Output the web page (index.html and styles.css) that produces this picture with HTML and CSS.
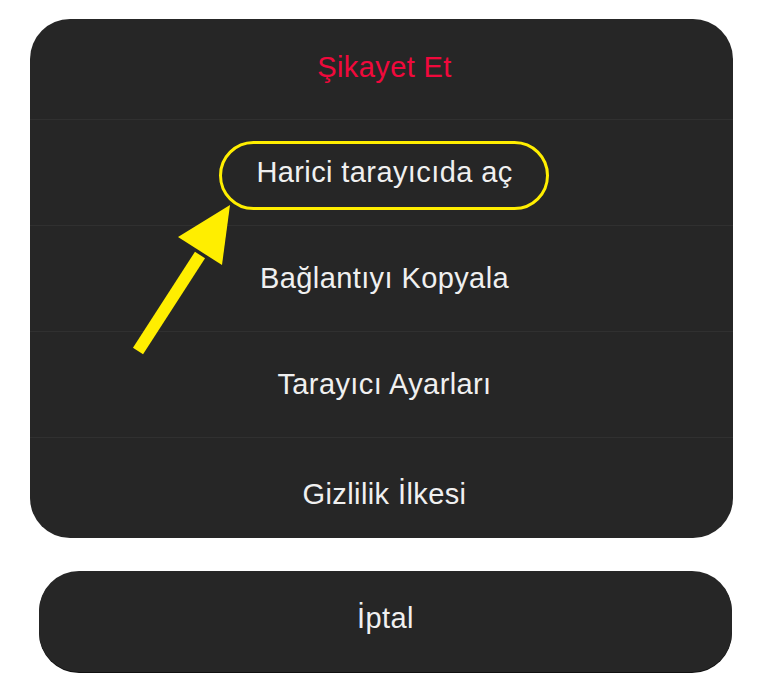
FILE: index.html
```html
<!DOCTYPE html>
<html lang="tr">
<head>
    <meta charset="UTF-8">
    <meta name="viewport" content="width=device-width, initial-scale=1.0">
    <title>Eylem Menüsü</title>
    <link rel="stylesheet" href="styles.css">
</head>
<body>
    <div class="sheet">
        <div class="menu">
            <div class="row row-first danger">Şikayet Et</div>
            <div class="row">
                <span class="highlight">Harici tarayıcıda aç</span>
            </div>
            <div class="row">Bağlantıyı Kopyala</div>
            <div class="row">Tarayıcı Ayarları</div>
            <div class="row row-last">Gizlilik İlkesi</div>
        </div>
        <div class="cancel">İptal</div>

        <!-- sarı ok -->
        <svg class="arrow" width="130" height="160" viewBox="0 0 130 160">
            <line x1="18" y1="154" x2="80" y2="58" stroke="#ffee00" stroke-width="12"/>
            <polygon points="110,8 58,40 102,68" fill="#ffee00"/>
        </svg>
    </div>
</body>
</html>
```

FILE: styles.css
```css
body {
    margin: 0;
    background: #ffffff;
    font-family: "Liberation Sans", Arial, sans-serif;
}
.sheet {
    position: relative;
    width: 768px;
    height: 680px;
    padding-top: 19px;
    box-sizing: border-box;
}
.menu {
    margin-left: 30px;
    width: 703px;
    background: #262626;
    border-radius: 40px;
    overflow: hidden;
}
.row {
    height: 106px;
    display: flex;
    align-items: center;
    justify-content: center;
    padding-left: 6px;
    color: #f0f0f0;
    font-size: 29px;
    letter-spacing: 0.4px;
    border-top: 1px solid #303030;
    box-sizing: border-box;
}
.row-first {
    height: 100px;
    padding-bottom: 4px;
    border-top: none;
}
.row-last {
    height: 101px;
    padding-top: 12px;
}
.danger {
    color: #f0093c;
}
.highlight {
    position: relative;
}
.highlight::after {
    content: "";
    position: absolute;
    left: -37px;
    right: -36px;
    top: -15px;
    bottom: -21px;
    border: 3px solid #ffee00;
    border-radius: 36px;
}
.cancel {
    margin: 33px 0 0 39px;
    width: 693px;
    height: 101px;
    padding-bottom: 6px;
    box-sizing: border-box;
    background: #262626;
    border-radius: 40px;
    display: flex;
    align-items: center;
    justify-content: center;
    color: #f0f0f0;
    font-size: 29px;
    letter-spacing: 0.4px;
    box-shadow: 0 1px 0 #111111;
}
.arrow {
    position: absolute;
    left: 120px;
    top: 197px;
}
```
